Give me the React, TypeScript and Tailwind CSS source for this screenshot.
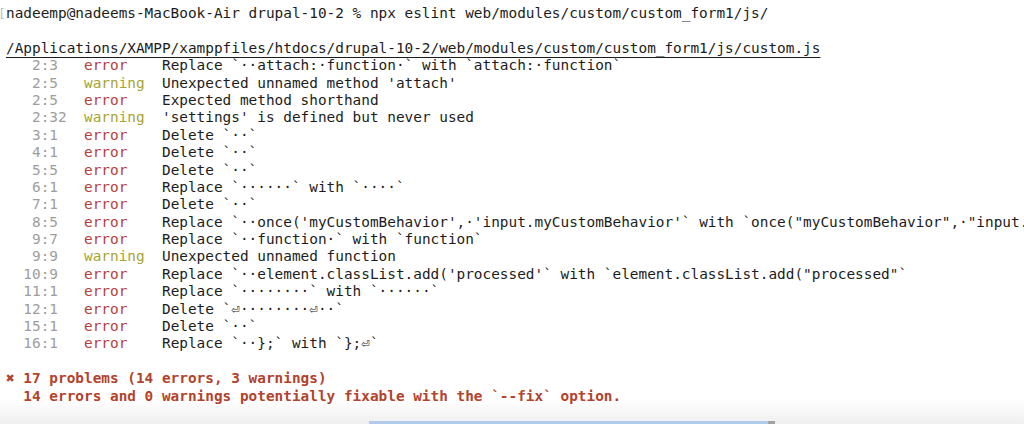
import React from "react";

type Row = {
  pos: string;
  kind: "error" | "warning";
  msg: string;
};

const rows: Row[] = [
  { pos: " 2:3 ", kind: "error", msg: "Replace `··attach:·function·` with `attach:·function`" },
  { pos: " 2:5 ", kind: "warning", msg: "Unexpected unnamed method 'attach'" },
  { pos: " 2:5 ", kind: "error", msg: "Expected method shorthand" },
  { pos: " 2:32", kind: "warning", msg: "'settings' is defined but never used" },
  { pos: " 3:1 ", kind: "error", msg: "Delete `··`" },
  { pos: " 4:1 ", kind: "error", msg: "Delete `··`" },
  { pos: " 5:5 ", kind: "error", msg: "Delete `··`" },
  { pos: " 6:1 ", kind: "error", msg: "Replace `······` with `····`" },
  { pos: " 7:1 ", kind: "error", msg: "Delete `··`" },
  {
    pos: " 8:5 ",
    kind: "error",
    msg: "Replace `··once('myCustomBehavior',·'input.myCustomBehavior'` with `once(\"myCustomBehavior\",·\"input.myCustomBehavior\"`",
  },
  { pos: " 9:7 ", kind: "error", msg: "Replace `··function·` with `function`" },
  { pos: " 9:9 ", kind: "warning", msg: "Unexpected unnamed function" },
  { pos: "10:9 ", kind: "error", msg: "Replace `··element.classList.add('processed'` with `element.classList.add(\"processed\"`" },
  { pos: "11:1 ", kind: "error", msg: "Replace `········` with `······`" },
  { pos: "12:1 ", kind: "error", msg: "Delete `⏎········⏎··`" },
  { pos: "15:1 ", kind: "error", msg: "Delete `··`" },
  { pos: "16:1 ", kind: "error", msg: "Replace `··};` with `};⏎`" },
];

const Line: React.FC<{ children?: React.ReactNode; className?: string }> = ({ children, className }) => (
  <div className={`h-[17.4px] whitespace-pre ${className ?? ""}`}>{children}</div>
);

export default function App() {
  return (
    <div className="w-[1024px] h-[424px] overflow-hidden flex flex-col bg-linear-to-b from-white from-[94%] to-[#efefef] text-[#1c1c1c] text-[14.4px] leading-[17.4px] font-['DejaVu_Sans_Mono','Liberation_Mono',monospace]">
      <div className="flex-1 pt-[5px] pl-[6px]">
        <Line className="relative">
          <span className="absolute -left-[8px] top-0 text-[13px] text-[#c0c0c0]">[</span>
          nadeemp@nadeems-MacBook-Air drupal-10-2 % npx eslint web/modules/custom/custom_form1/js/
        </Line>
        <Line />
        <Line>
          <span className="underline underline-offset-[4px] decoration-1">
            /Applications/XAMPP/xamppfiles/htdocs/drupal-10-2/web/modules/custom/custom_form1/js/custom.js
          </span>
        </Line>
        {rows.map((r, i) => (
          <Line key={i}>
            {"  "}
            <span className="text-[#9d9d9d]">{r.pos}</span>
            {"  "}
            <span className={r.kind === "error" ? "text-[#b3403d]" : "text-[#a6a431]"}>
              {r.kind === "error" ? "error  " : "warning"}
            </span>
            {"  "}
            {r.msg}
          </Line>
        ))}
        <Line />
        <Line className="font-bold text-[#b2432c]">✖ 17 problems (14 errors, 3 warnings)</Line>
        <Line className="font-bold text-[#b2432c]">  14 errors and 0 warnings potentially fixable with the `--fix` option.</Line>
      </div>
      <div className="h-[3px] flex">
        <div className="ml-[369px] w-[399px] bg-[#b2cbec]" />
        <div className="w-[7px] bg-[#a3a3a3]" />
      </div>
    </div>
  );
}
